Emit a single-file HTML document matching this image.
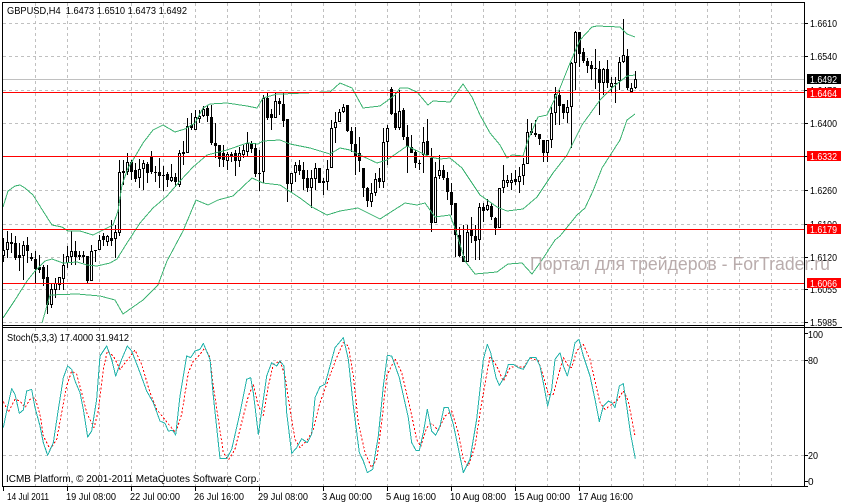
<!DOCTYPE html>
<html lang="en"><head><meta charset="utf-8"><title>GBPUSD,H4</title>
<style>
html,body{margin:0;padding:0;background:#fff;width:842px;height:504px;overflow:hidden}
svg{display:block}
text{font-family:"Liberation Sans","DejaVu Sans",sans-serif;font-size:10px;fill:#000}
.w{fill:#fff}
</style></head><body>
<svg width="842" height="504" viewBox="0 0 842 504" xmlns="http://www.w3.org/2000/svg">
<rect width="842" height="504" fill="#fff"/>
<!-- grid -->
<g stroke="#c0c0c0" stroke-width="1" stroke-dasharray="3 3" fill="none" shape-rendering="crispEdges">
<path d="M3 23.5H804M3 56.5H804M3 90.5H804M3 123.5H804M3 190.5H804M3 224.5H804M3 257.5H804M3 289.5H804M3 322.5H804M3 360.5H804M3 455.5H804"/>
<path d="M35.5 3V325M67.5 3V325M99.5 3V325M131.5 3V325M163.5 3V325M195.5 3V325M227.5 3V325M259.5 3V325M291.5 3V325M323.5 3V325M355.5 3V325M387.5 3V325M419.5 3V325M451.5 3V325M483.5 3V325M515.5 3V325M547.5 3V325M579.5 3V325M611.5 3V325M643.5 3V325M675.5 3V325M707.5 3V325M739.5 3V325M771.5 3V325"/>
<path d="M35.5 328V486M67.5 328V486M99.5 328V486M131.5 328V486M163.5 328V486M195.5 328V486M227.5 328V486M259.5 328V486M291.5 328V486M323.5 328V486M355.5 328V486M387.5 328V486M419.5 328V486M451.5 328V486M483.5 328V486M515.5 328V486M547.5 328V486M579.5 328V486M611.5 328V486M643.5 328V486M675.5 328V486M707.5 328V486M739.5 328V486M771.5 328V486"/>
</g>
<path d="M3 79.5H804" stroke="#c0c0c0" shape-rendering="crispEdges"/>
<!-- candle wicks -->
<path fill="none" stroke="#000" stroke-width="1" shape-rendering="crispEdges" d="M3.5 238V262M7.5 231V258M11.5 233V253M15.5 236V260M19.5 243V271M23.5 241V280M27.5 237V263M31.5 253V261M35.5 251V283M39.5 255V273M43.5 265V286M47.5 265V314M51.5 283V308M55.5 278V298M59.5 277V290M63.5 254V290M67.5 246V268M71.5 231V265M75.5 241V265M79.5 251V260M83.5 251V263M87.5 256V283M91.5 245V281M95.5 250V262M99.5 235V250M103.5 233V246M107.5 235V246M111.5 220V246M115.5 225V258M119.5 160V236M123.5 160V185M127.5 153V175M131.5 160V180M135.5 163V182M139.5 159V188M143.5 160V190M147.5 162V183M151.5 151V174M155.5 166V182M159.5 158V188M163.5 166V191M167.5 172V187M171.5 164V182M175.5 173V187M179.5 150V187M183.5 141V165M187.5 118V153M191.5 113V130M195.5 110V130M199.5 110V123M203.5 106V117M207.5 105V122M211.5 105V145M215.5 123V158M219.5 145V167M223.5 145V167M227.5 152V170M231.5 152V162M235.5 150V176M239.5 147V167M243.5 145V158M247.5 132V157M251.5 141V153M255.5 143V177M259.5 150V191M263.5 95V183M267.5 93V120M271.5 109V130M275.5 92V118M279.5 98V115M283.5 92V127M287.5 119V202M291.5 173V193M295.5 162V182M299.5 160V175M303.5 162V190M307.5 170V192M311.5 170V208M315.5 163V190M319.5 168V183M323.5 178V195M327.5 160V190M331.5 120V168M335.5 112V143M339.5 109V122M343.5 104V113M347.5 105V132M351.5 127V152M355.5 127V175M359.5 137V172M363.5 168V197M367.5 187V207M371.5 183V207M375.5 173V196M379.5 168V188M383.5 128V188M387.5 125V165M391.5 87V115M395.5 93V130M399.5 90V130M403.5 108V140M407.5 125V173M411.5 135V153M415.5 150V168M419.5 160V170M423.5 127V173M427.5 119V155M431.5 148V232M435.5 162V223M439.5 155V179M443.5 165V180M447.5 172V200M451.5 183V215M455.5 203V257M459.5 227V257M463.5 225V262M467.5 225V262M471.5 217V243M475.5 225V260M479.5 203V260M483.5 203V222M487.5 199V211M491.5 203V220M495.5 217V235M499.5 188V228M503.5 165V193M507.5 175V187M511.5 173V190M515.5 170V185M519.5 167V193M523.5 158V185M527.5 119V164M531.5 123V135M535.5 120V137M539.5 134V145M543.5 140V162M547.5 140V162M551.5 107V148M555.5 87V125M559.5 90V125M563.5 106V119M567.5 100V123M571.5 62V148M575.5 31V90M579.5 32V67M583.5 48V63M587.5 58V73M591.5 61V80M595.5 49V89M599.5 61V115M603.5 68V95M607.5 60V88M611.5 77V93M615.5 77V103M619.5 57V90M623.5 19V63M627.5 49V90M631.5 83V93M635.5 71V89"/>
<!-- candle bodies -->
<path fill="none" stroke="#000" stroke-width="3" shape-rendering="crispEdges" d="M3.5 250V256M7.5 242V250M11.5 242V244M15.5 243V258M19.5 255V258M23.5 245V256M27.5 245V251M31.5 257V259M35.5 259V269M39.5 267V270M43.5 267V279M47.5 277V305M51.5 289V305M55.5 283V290M59.5 277V285M63.5 265V279M67.5 256V263M71.5 251V257M75.5 251V257M79.5 255V257M83.5 255V257M87.5 256V281M91.5 251V281M95.5 250V251M99.5 240V250M103.5 236V240M107.5 236V242M111.5 238V241M115.5 232V239M119.5 172V233M123.5 171V173M127.5 162V172M131.5 162V172M135.5 170V179M139.5 169V178M143.5 163V169M147.5 164V173M151.5 157V172M155.5 172V173M159.5 172V176M163.5 175V176M167.5 174V180M171.5 177V181M175.5 177V182M179.5 153V185M183.5 152V154M187.5 126V153M191.5 125V128M195.5 117V130M199.5 116V119M203.5 109V116M207.5 108V116M211.5 117V143M215.5 143V146M219.5 145V159M223.5 153V160M227.5 154V161M231.5 154V156M235.5 153V161M239.5 153V161M243.5 150V155M247.5 143V152M251.5 144V149M255.5 148V174M259.5 173V174M263.5 98V172M267.5 98V118M271.5 114V118M275.5 101V118M279.5 101V104M283.5 104V121M287.5 119V184M291.5 173V184M295.5 165V173M299.5 165V171M303.5 170V179M307.5 178V188M311.5 178V188M315.5 168V179M319.5 168V183M323.5 181V183M327.5 169V182M331.5 128V168M335.5 122V128M339.5 112V122M343.5 107V112M347.5 105V131M351.5 131V144M355.5 144V157M359.5 153V161M363.5 168V188M367.5 188V201M371.5 193V202M375.5 179V193M379.5 178V182M383.5 142V182M387.5 128V142M391.5 89V114M395.5 113V128M399.5 111V128M403.5 110V137M407.5 137V147M411.5 147V153M415.5 152V163M419.5 163V164M423.5 142V155M427.5 141V155M431.5 158V223M435.5 177V223M439.5 170V176M443.5 170V178M447.5 178V192M451.5 192V205M455.5 203V235M459.5 235V256M463.5 256V262M467.5 232V262M471.5 230V236M475.5 236V241M479.5 207V240M483.5 207V211M487.5 205V210M491.5 206V217M495.5 218V228M499.5 188V228M503.5 180V188M507.5 180V183M511.5 180V183M515.5 179V182M519.5 176V182M523.5 164V176M527.5 132V164M531.5 131V133M535.5 133V135M539.5 134V139M543.5 140V153M547.5 140V153M551.5 113V140M555.5 94V113M559.5 95V106M563.5 104V113M567.5 107V113M571.5 63V107M575.5 32V63M579.5 32V54M583.5 52V61M587.5 61V66M591.5 65V69M595.5 68V69M599.5 69V83M603.5 69V83M607.5 69V83M611.5 83V87M615.5 83V84M619.5 62V81M623.5 55V62M627.5 56V88M631.5 88V92M635.5 79V88"/>
<!-- white candle interiors -->
<path fill="none" stroke="#fff" stroke-width="1" shape-rendering="crispEdges" d="M3.5 251V255M7.5 243V249M23.5 246V255M51.5 290V304M55.5 284V289M59.5 278V284M63.5 266V278M67.5 257V262M71.5 252V256M91.5 252V280M99.5 241V249M107.5 237V241M115.5 233V238M119.5 173V232M127.5 163V171M139.5 170V177M143.5 164V168M171.5 178V180M179.5 154V184M187.5 127V152M195.5 118V129M199.5 117V118M203.5 110V115M227.5 155V160M239.5 154V160M243.5 151V154M247.5 144V151M263.5 99V171M275.5 102V117M291.5 174V183M295.5 166V172M311.5 179V187M315.5 169V178M327.5 170V181M331.5 129V167M335.5 123V127M339.5 113V121M343.5 108V111M371.5 194V201M375.5 180V192M383.5 143V181M387.5 129V141M399.5 112V127M423.5 143V154M435.5 178V222M439.5 171V175M467.5 233V261M479.5 208V239M487.5 206V209M499.5 189V227M503.5 181V187M507.5 181V182M511.5 181V182M519.5 177V181M523.5 165V175M527.5 133V163M547.5 141V152M551.5 114V139M555.5 95V112M567.5 108V112M571.5 64V106M575.5 33V62M603.5 70V82M611.5 84V86M619.5 63V80M623.5 56V61M631.5 89V91M635.5 80V87"/>
<!-- bollinger bands -->
<g fill="none" stroke="#3cb371" stroke-width="1" stroke-linejoin="round" shape-rendering="crispEdges">
<polyline points="3,207 8,191 15,186 20,185 25,188 33,195 43,211 52,225 62,227 68,231 80,231 93,235 103,230 113,225 118,211 122,185 128,168 133,160 143,143 153,130 163,125 175,132 185,129 195,123 203,108 210,104 227,103 247,106 257,108 263,98 277,94 283,94 325,92 330,92 340,83 352,88 363,108 380,106 395,95 400,88 408,88 417,92 428,105 433,101 450,102 463,84 472,97 480,115 490,133 500,145 507,158 512,155 523,156 528,140 538,117 547,115 560,88 570,63 580,40 592,27 597,26 620,27 627,34 635,37"/>
<polyline points="3,318 15,300 27,281 35,271 45,261 52,259 63,263 77,262 87,265 97,266 110,263 117,259 127,243 140,223 153,208 167,196 180,181 193,167 207,155 227,150 247,143 258,144 263,141 280,140 290,144 310,148 330,154 340,148 350,150 360,155 377,163 387,160 407,146 430,157 440,159 450,158 462,168 480,195 497,207 507,211 523,209 537,197 553,173 567,155 582,125 600,100 613,87 627,76 635,75"/>
<polyline points="42,323 50,295 77,294 100,296 115,300 123,314 143,300 158,285 167,261 183,231 196,200 208,205 218,200 233,196 252,178 263,183 280,185 300,198 312,207 327,215 340,211 358,208 380,219 405,203 417,205 425,203 430,210 435,217 450,215 455,228 465,261 475,274 497,272 508,264 522,263 532,274 542,260 555,240 560,236 577,215 585,208 593,191 602,168 620,140 627,120 635,114"/>
</g>
<!-- horizontal level lines -->
<path d="M3 92.5H804M3 156.5H804M3 229.5H804M3 283.5H804" stroke="#f00" shape-rendering="crispEdges"/>
<!-- stochastic -->
<g fill="none" stroke-linejoin="round" shape-rendering="crispEdges">
<g transform="translate(0,336) scale(.33333)">
<polyline stroke="#f00" stroke-width="3" stroke-dasharray="6 6" points="10,197 25,228 45,190 60,195 75,215 90,190 105,185 120,235 130,300 150,340 170,310 185,230 200,150 215,105 230,115 245,170 260,230 282,275 295,225 310,100 322,45 340,60 360,100 380,75 405,42 425,85 450,170 470,220 490,245 510,270 527,290 545,235 565,110 580,75 600,55 615,35 630,65 640,150 655,250 670,350 685,372 705,340 725,260 745,180 760,145 775,210 790,238 805,150 820,85 840,75"/>
<polyline stroke="#20b2aa" stroke-width="3" points="10,275 20,225 35,158 45,175 58,232 70,222 80,165 95,160 105,215 120,270 130,320 143,358 160,320 175,220 190,125 203,90 215,100 225,135 240,170 250,220 263,303 275,285 290,190 300,60 320,30 335,70 347,120 365,70 382,30 395,45 420,110 440,165 460,200 480,255 495,262 505,285 518,283 527,297 540,180 560,60 572,65 585,45 600,40 610,22 630,70 640,180 660,368 680,368 695,340 720,230 740,130 752,125 760,170 775,295 785,225 800,120 815,80 830,90 840,75"/>
</g>
<g transform="translate(280,336) scale(.33333)">
<polyline stroke="#f00" stroke-width="3" stroke-dasharray="6 6" points="0,75 15,120 30,220 45,310 60,335 80,315 100,280 120,200 140,145 170,65 190,20 205,30 220,120 235,260 255,350 275,395 290,370 305,260 320,120 345,68 365,110 390,215 410,310 422,332 440,275 455,262 475,283 495,240 515,225 535,290 550,370 565,390 585,330 605,200 630,60 650,90 670,135 690,95 710,90 730,95 750,65 775,75 790,120 805,175 820,175 840,100"/>
<polyline stroke="#20b2aa" stroke-width="3" points="0,75 12,90 20,230 35,352 50,335 65,308 82,320 95,295 105,185 120,152 135,145 150,90 165,35 190,5 205,70 220,210 238,350 250,375 262,410 278,400 295,300 310,150 322,58 335,60 358,125 385,245 395,320 408,343 418,343 430,290 442,220 455,285 467,298 480,270 492,215 505,215 520,265 550,410 570,370 590,250 610,70 622,25 632,50 648,125 658,148 675,120 685,85 700,85 715,95 730,100 750,65 768,65 780,90 790,140 803,210 815,160 825,70 840,50"/>
</g>
<g transform="translate(560,336) scale(.33333)">
<polyline stroke="#f00" stroke-width="3" stroke-dasharray="6 6" points="0,100 10,65 25,90 35,95 50,45 70,25 90,70 105,135 120,200 135,220 155,205 170,195 190,165 205,195 225,300"/>
<polyline stroke="#20b2aa" stroke-width="3" points="0,50 10,90 22,120 35,70 45,20 57,10 70,60 90,120 105,190 118,257 130,210 145,195 155,200 165,215 178,150 190,143 200,210 212,295 226,368"/>
</g>
</g>
<!-- frame and axes -->
<g stroke="#000" shape-rendering="crispEdges" fill="none">
<path d="M2.5 2V487" stroke-width="1"/>
<path d="M2 2.5H805M2 325.5H804M2 327.5H842M2 486.5H808M804.5 2V487"/>
<path d="M805 23.5H808M805 56.5H808M805 90.5H808M805 123.5H808M805 156.5H808M805 190.5H808M805 224.5H808M805 257.5H808M805 289.5H808M805 322.5H808M805 333.5H808M805 360.5H808M805 455.5H808M805 481.5H808"/>
<path d="M3.5 487V491M67.5 487V491M131.5 487V491M195.5 487V491M259.5 487V491M323.5 487V491M387.5 487V491M451.5 487V491M515.5 487V491M579.5 487V491"/>
</g>
<!-- price labels -->
<text x="810" y="27" textLength="27" lengthAdjust="spacingAndGlyphs">1.6610</text>
<text x="810" y="60" textLength="27" lengthAdjust="spacingAndGlyphs">1.6540</text>
<text x="810" y="94" textLength="27" lengthAdjust="spacingAndGlyphs">1.6470</text>
<text x="810" y="127" textLength="27" lengthAdjust="spacingAndGlyphs">1.6400</text>
<text x="810" y="194" textLength="27" lengthAdjust="spacingAndGlyphs">1.6260</text>
<text x="810" y="228" textLength="27" lengthAdjust="spacingAndGlyphs">1.6190</text>
<text x="810" y="261" textLength="27" lengthAdjust="spacingAndGlyphs">1.6120</text>
<text x="810" y="293" textLength="27" lengthAdjust="spacingAndGlyphs">1.6055</text>
<text x="810" y="326" textLength="27" lengthAdjust="spacingAndGlyphs">1.5985</text>
<rect x="807" y="74" width="34" height="10" fill="#000"/>
<text class="w" x="810" y="83" textLength="27" lengthAdjust="spacingAndGlyphs">1.6492</text>
<g fill="#f00">
<rect x="807" y="88" width="34" height="10"/>
<rect x="807" y="151" width="34" height="10"/>
<rect x="807" y="224" width="34" height="10"/>
<rect x="807" y="278" width="34" height="10"/>
</g>
<text class="w" x="810" y="97" textLength="27" lengthAdjust="spacingAndGlyphs">1.6464</text>
<text class="w" x="810" y="160" textLength="27" lengthAdjust="spacingAndGlyphs">1.6332</text>
<text class="w" x="810" y="233" textLength="27" lengthAdjust="spacingAndGlyphs">1.6179</text>
<text class="w" x="810" y="287" textLength="27" lengthAdjust="spacingAndGlyphs">1.6066</text>
<text x="808" y="338" textLength="15" lengthAdjust="spacingAndGlyphs">100</text>
<text x="808" y="364" textLength="10" lengthAdjust="spacingAndGlyphs">80</text>
<text x="808" y="459" textLength="10" lengthAdjust="spacingAndGlyphs">20</text>
<text x="808" y="485">0</text>
<!-- titles -->
<text x="7" y="14" textLength="180" lengthAdjust="spacingAndGlyphs" xml:space="preserve">GBPUSD,H4  1.6473 1.6510 1.6473 1.6492</text>
<text x="7" y="341" textLength="122" lengthAdjust="spacingAndGlyphs">Stoch(5,3,3) 17.4000 31.9412</text>
<text x="6" y="482" textLength="253" lengthAdjust="spacingAndGlyphs">ICMB Platform, © 2001-2011 MetaQuotes Software Corp.</text>
<!-- date axis -->
<text x="7" y="500" textLength="42" lengthAdjust="spacingAndGlyphs">14 Jul 2011</text>
<text x="66" y="500" textLength="50" lengthAdjust="spacingAndGlyphs">19 Jul 08:00</text>
<text x="130" y="500" textLength="50" lengthAdjust="spacingAndGlyphs">22 Jul 00:00</text>
<text x="194" y="500" textLength="50" lengthAdjust="spacingAndGlyphs">26 Jul 16:00</text>
<text x="258" y="500" textLength="50" lengthAdjust="spacingAndGlyphs">29 Jul 08:00</text>
<text x="322" y="500" textLength="50" lengthAdjust="spacingAndGlyphs">3 Aug 00:00</text>
<text x="386" y="500" textLength="50" lengthAdjust="spacingAndGlyphs">5 Aug 16:00</text>
<text x="450" y="500" textLength="56" lengthAdjust="spacingAndGlyphs">10 Aug 08:00</text>
<text x="514" y="500" textLength="56" lengthAdjust="spacingAndGlyphs">15 Aug 00:00</text>
<text x="578" y="500" textLength="55" lengthAdjust="spacingAndGlyphs">17 Aug 16:00</text>
<!-- watermark -->
<text x="530" y="270" textLength="300" lengthAdjust="spacingAndGlyphs" style="font-size:18px;fill:#b9acac">Портал для трейдеров - ForTrader.ru</text>
</svg>
</body></html>
